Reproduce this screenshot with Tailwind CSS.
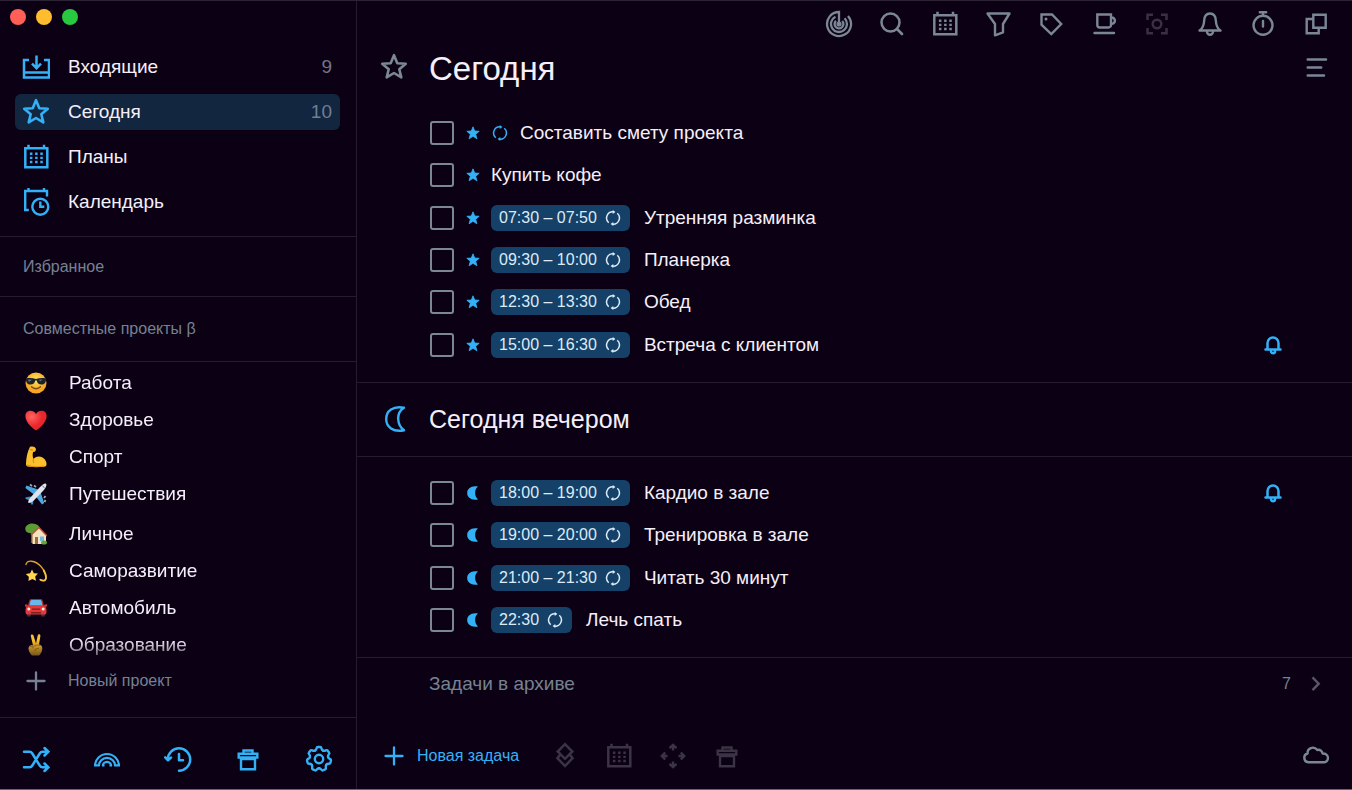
<!DOCTYPE html>
<html lang="ru">
<head>
<meta charset="utf-8">
<meta name="viewport" content="width=device-width, initial-scale=1">
<title>Сегодня</title>
<script src="https://cdn.jsdelivr.net/npm/@tailwindcss/browser@4"></script>
</head>
<body class="bg-[#0c0114] font-['Liberation_Sans',Arial,sans-serif] text-[#f5effa] text-[19px] leading-6">
<svg class="hidden" aria-hidden="true">
  <symbol id="star" viewBox="0 0 28 28"><path d="M14 2.200l3.300 8 8.500.6-6.500 5.500 2 8.100-7.300-4.400-7.300 4.400 2-8.100-6.500-5.500 8.500-.6z" fill="none" stroke="currentColor" stroke-width="2.600" stroke-linejoin="round"/></symbol>
  <symbol id="inbox" viewBox="0 0 28 28"><path d="M7 7H2v17.500h25V7h-5M2 19.500h25M14.500 2.500V15M10 10.700l4.500 4.500 4.500-4.500" fill="none" stroke="currentColor" stroke-width="2.500"/></symbol>
  <symbol id="calendar" viewBox="0 0 28 28"><path d="M3.300 5.300h22v18.900h-22zM6.500 1.800v3.500M22 1.800v3.500" fill="none" stroke="currentColor" stroke-width="2.500"/><path d="M7.900 9.600h2.500V12H7.900zm5.200 0h2.500V12h-2.500zm5.200 0h2.500V12h-2.500zM7.900 13.700h2.500v2.400H7.900zm5.200 0h2.500v2.400h-2.500zm5.200 0h2.500v2.400h-2.500zM7.900 17.800h2.500v2.400H7.900zm5.200 0h2.500v2.400h-2.500zm5.200 0h2.500v2.400h-2.500z" fill="currentColor"/></symbol>
  <symbol id="schedule" viewBox="0 0 28 28"><path d="M6.800 22H3.200V3H25v5.500M6.500 0v3M22 0v3M18.300 13.500v5.300h4" fill="none" stroke="currentColor" stroke-width="2.400"/><circle cx="18.300" cy="18.800" r="8" fill="none" stroke="currentColor" stroke-width="2.400"/></symbol>
  <symbol id="plus" viewBox="0 0 28 28"><path d="M14 5.500v17M5.500 14h17" fill="none" stroke="currentColor" stroke-width="2.300" stroke-linecap="round"/></symbol>
  <symbol id="shuffle" viewBox="0 0 28 28"><path d="M2 6.700h5.500c1.500 0 2 .5 2.800 1.800l7.400 12c.8 1.300 1.300 1.800 2.800 1.800H26M2 22.300h5.500c1.500 0 2-.5 2.800-1.800l7.400-12c.8-1.300 1.300-1.800 2.800-1.800H26M22.500 3l3.800 3.700-3.800 3.800M22.500 18.500l3.800 3.800-3.800 3.700" fill="none" stroke="currentColor" stroke-width="2.500" stroke-linecap="round"/></symbol>
  <symbol id="rainbow" viewBox="0 0 28 28"><path d="M2 21a12 12 0 0 1 24 0M5.900 21a8.100 8.100 0 0 1 16.200 0M9.800 21a4.200 4.200 0 0 1 8.400 0M1 20.300h5.900M9 20.300h2.500M16.500 20.300H19M21.100 20.300H27" fill="none" stroke="currentColor" stroke-width="2.200"/></symbol>
  <symbol id="history" viewBox="0 0 28 28"><path d="M3.800 14.500A11.200 11.200 0 1 1 15 25.700M1.200 12.300l2.800 3 3-2.700M15 9v6.300h4" fill="none" stroke="currentColor" stroke-width="2.500" stroke-linecap="round" stroke-linejoin="round"/></symbol>
  <symbol id="trash" viewBox="0 0 28 28"><path d="M4.700 8.700h18.600v3.800H4.700zM9.500 8.500V5.500h9v3M7 12.500v11.700h14V12.500M7 14h14" fill="none" stroke="currentColor" stroke-width="2.400"/></symbol>
  <symbol id="tooth" viewBox="-14 -14 28 28"><path d="M-4.030-8.380C-3-8.900-2.700-9.600-2.500-10.600Q-2.200-12-1.100-12H1.100Q2.200-12 2.500-10.600C2.700-9.600 3-8.900 4.030-8.380" fill="none" stroke="currentColor" stroke-width="2.400" stroke-linecap="round"/></symbol>
  <symbol id="gear" viewBox="0 0 28 28"><g fill="none"><use href="#tooth" width="28" height="28"/><use href="#tooth" width="28" height="28" transform="rotate(51.430 14 14)"/><use href="#tooth" width="28" height="28" transform="rotate(102.860 14 14)"/><use href="#tooth" width="28" height="28" transform="rotate(154.290 14 14)"/><use href="#tooth" width="28" height="28" transform="rotate(205.710 14 14)"/><use href="#tooth" width="28" height="28" transform="rotate(257.140 14 14)"/><use href="#tooth" width="28" height="28" transform="rotate(308.570 14 14)"/><circle cx="14" cy="14" r="4.200" stroke="currentColor" stroke-width="2.400"/></g></symbol>
  <symbol id="radar" viewBox="0 0 28 28"><path d="M14 14V2A12 12 0 1 0 23 6M10.500 6.800A8 8 0 1 0 19.600 8.300M11 10.800A4.400 4.400 0 1 0 17.200 11" fill="none" stroke="currentColor" stroke-width="2.300"/><circle cx="14" cy="14" r="2.600" fill="currentColor"/></symbol>
  <symbol id="search" viewBox="0 0 28 28"><circle cx="12.500" cy="12.500" r="9" fill="none" stroke="currentColor" stroke-width="2.500"/><path d="M19 19l5 5" stroke="currentColor" stroke-width="2.700" stroke-linecap="round"/></symbol>
  <symbol id="funnel" viewBox="0 0 28 28"><path d="M3.500 3.500h22L19 14v8.300l-8 3V14z" fill="none" stroke="currentColor" stroke-width="2.400" stroke-linejoin="round"/></symbol>
  <symbol id="tag" viewBox="0 0 28 28"><path d="M4.500 4.500H15L24.200 14 14.300 24 4.500 14.700z" fill="none" stroke="currentColor" stroke-width="2.400"/><circle cx="9" cy="8.900" r="1.500" fill="currentColor"/></symbol>
  <symbol id="cup" viewBox="0 0 28 28"><path d="M7.300 4.500H21V15a2.500 2.500 0 0 1-2.500 2.500H9.800A2.500 2.500 0 0 1 7.300 15zM21 7.500h.7a3.200 3.200 0 0 1 0 6.400H21M4.500 23h19.500" fill="none" stroke="currentColor" stroke-width="2.400" stroke-linecap="round"/></symbol>
  <symbol id="focus" viewBox="0 0 28 28"><path d="M4.500 10V4.700H10M18 4.700h5.500V10M23.500 18v5.200H18M10 23.200H4.500V18" fill="none" stroke="currentColor" stroke-width="2.500"/><circle cx="14" cy="14" r="4.300" fill="none" stroke="currentColor" stroke-width="2.500"/></symbol>
  <symbol id="bell" viewBox="0 0 28 28"><path d="M3.500 20.500C7.500 18 7.900 15 8.100 11c.2-5 2.400-7.500 5.900-7.500s5.700 2.500 5.900 7.500c.2 4 .6 7 4.600 9.500zM11 21v.8a3 3 0 0 0 6 0V21" fill="none" stroke="currentColor" stroke-width="2.400" stroke-linejoin="round"/></symbol>
  <symbol id="timer" viewBox="0 0 28 28"><circle cx="14" cy="15.300" r="9.500" fill="none" stroke="currentColor" stroke-width="2.400"/><path d="M10.800 2.300h6.400M14 2.300v3M14 11v5.500" stroke="currentColor" stroke-width="2.400" stroke-linecap="round"/></symbol>
  <symbol id="copy" viewBox="0 0 28 28"><path d="M11.300 4.700h12.400v13H11.300zM11.300 9H4.700v14.200h12v-5.500" fill="none" stroke="currentColor" stroke-width="2.400"/></symbol>
  <symbol id="lines" viewBox="0 0 28 28"><path d="M5.700 5.500h18.300M5.700 13.500h13.500M5.700 21.500h16.300" stroke="currentColor" stroke-width="2.500" stroke-linecap="round"/></symbol>
  <symbol id="moon" viewBox="0 0 28 28"><path d="M24 2.700C13 .5 6.200 6 6.200 14S13 27.500 24 25.300C17 20 15.500 8 24 2.700z" fill="none" stroke="currentColor" stroke-width="2.400" stroke-linejoin="round"/></symbol>
  <symbol id="stack" viewBox="0 0 28 28"><path d="M14 2.200l7.300 7.300L14 16.800 6.700 9.500zM8.700 13.200l-2.300 3L14 24l7.600-7.800-2.300-3" fill="none" stroke="currentColor" stroke-width="2.500"/></symbol>
  <symbol id="move" viewBox="0 0 28 28"><path d="M10.500 6.200L14 2.800l3.500 3.400M14 3v5.500M10.500 21.800l3.500 3.400 3.500-3.400M14 25v-5.500M6.200 10.500L2.800 14l3.400 3.500M3 14h5.500M21.800 10.500l3.400 3.500-3.400 3.500M25 14h-5.500" fill="none" stroke="currentColor" stroke-width="2.400"/></symbol>
  <symbol id="cloud" viewBox="0 0 28 28"><path d="M6.200 20.300a4.500 4.500 0 0 1-.6-8.800C5 6 11.800 3.600 15.300 8c2.500-.7 5 .8 5.200 3.500 3.200-.1 5.500 1.700 5.500 4.500a4.300 4.300 0 0 1-4.300 4.300z" fill="none" stroke="currentColor" stroke-width="2.400" stroke-linejoin="round"/></symbol>
  <symbol id="chevron" viewBox="0 0 28 28"><path d="M10.500 7.300l6.200 6.400-6.200 6.400" fill="none" stroke="currentColor" stroke-width="2.400"/></symbol>
  <symbol id="star-s" viewBox="0 0 14 14"><path d="M7 .8l1.700 4.200 4.500.3-3.500 2.900 1.200 4.600L7 10.300l-3.900 2.500 1.200-4.600L.8 5.300 5.300 5z" fill="#33b1f7" stroke="#33b1f7" stroke-width=".8" stroke-linejoin="round"/></symbol>
  <symbol id="moon-s" viewBox="0 0 14 14"><path d="M12 .6C5.500-.8 1.200 2.500 1.200 7s4.300 7.800 10.800 6.400C8.300 10.500 8 3.500 12 .6z" fill="#33b1f7"/></symbol>
  <symbol id="repeat" viewBox="0 0 16 16"><path d="M3.700 12.700A6.200 6.200 0 0 1 8.500 1.900M12.300 3.300A6.200 6.200 0 0 1 7.500 14.100" fill="none" stroke="currentColor" stroke-width="1.500"/><path d="M7.700 0l2.700 2-2.700 2zM8.300 16l-2.700-2 2.700-2z" fill="currentColor"/></symbol>
  <symbol id="bell-s" viewBox="0 0 20 20"><path d="M2.500 14.500h15M4.500 14V8a5.500 5.500 0 0 1 11 0v6M8 15.500v.7a2 2 0 0 0 4 0v-.7" fill="none" stroke="currentColor" stroke-width="2.500" stroke-linecap="round"/></symbol>
</svg>

<div class="flex min-h-screen border-t border-[#2c2434] border-b border-b-[#6d6172]">
  <aside class="flex w-[357px] shrink-0 flex-col border-r border-[#251c2f]">
    <div class="flex h-8 items-center gap-[10px] pl-[10px]">
      <button aria-label="Закрыть" class="size-4 rounded-full bg-[#ff5f57]"></button>
      <button aria-label="Свернуть" class="size-4 rounded-full bg-[#febc2e]"></button>
      <button aria-label="Развернуть" class="size-4 rounded-full bg-[#28c840]"></button>
    </div>
    <nav class="flex flex-col gap-[9px] pt-4 pr-4 pb-4 pl-[15px]">
      <a href="#" class="flex h-9 items-center rounded-md px-[7px]"><svg class="size-7 text-[#33b1f7]"><use href="#inbox"/></svg><span class="ml-[18px] flex-1">Входящие</span><span class="mr-[1px] text-[#767384]">9</span></a>
      <a href="#" aria-current="page" class="flex h-9 items-center rounded-md bg-[#13263f] px-[7px]"><svg class="size-7 text-[#33b1f7]"><use href="#star"/></svg><span class="ml-[18px] flex-1">Сегодня</span><span class="mr-[1px] text-[#6f7f95]">10</span></a>
      <a href="#" class="flex h-9 items-center rounded-md px-[7px]"><svg class="size-7 text-[#33b1f7]"><use href="#calendar"/></svg><span class="ml-[18px]">Планы</span></a>
      <a href="#" class="flex h-9 items-center rounded-md px-[7px]"><svg class="size-7 text-[#33b1f7]"><use href="#schedule"/></svg><span class="ml-[18px]">Календарь</span></a>
    </nav>
    <h2 class="flex h-[60px] items-center border-t border-[#251c2f] pl-[23px] text-base text-[#758292]">Избранное</h2>
    <h2 class="flex h-[65px] items-center border-t border-[#251c2f] pl-[23px] text-base text-[#758292]">Совместные проекты β</h2>
    <div class="flex flex-1 flex-col border-t border-[#251c2f] pt-[2px]">
      <ul class="[mask-image:linear-gradient(to_bottom,black_276px,transparent_304px)]">
        <li><a href="#" class="flex h-[37px] items-center gap-[22px] pl-[25px]"><svg class="size-[22px]" viewBox="0 0 22 22"><defs><radialGradient id="y" cy=".35"><stop offset="0" stop-color="#ffe45c"/><stop offset="1" stop-color="#f5a623"/></radialGradient></defs><circle cx="11" cy="11" r="10.500" fill="url(#y)"/><path d="M.8 6.500C4 5.700 8 6 11 7c3-1 7-1.300 10.200-.5-.3 4-1.500 6-4.700 6-2.800 0-4.300-1.500-4.700-4h-1.600c-.4 2.500-1.900 4-4.700 4C2.300 12.500 1.100 10.500.8 6.500z" fill="#1d2226"/><path d="M3 7.500l4 .2-3 2.300zM14 7.800l3.500-.2-2.500 2z" fill="#68727b"/><path d="M6.500 14.800c2.500 2.600 6.500 2.600 9 0" fill="none" stroke="#7d4312" stroke-width="1.300" stroke-linecap="round"/></svg><span>Работа</span></a></li>
        <li><a href="#" class="flex h-[37px] items-center gap-[22px] pl-[25px]"><svg class="size-[22px]" viewBox="0 0 22 22"><defs><radialGradient id="r" cx=".3" cy=".3"><stop offset="0" stop-color="#ff6560"/><stop offset="1" stop-color="#e8262b"/></radialGradient></defs><path d="M11 21.500C5 17.500.4 12 .4 7 .4 1 8 0 11 5c3-5 10.600-4 10.600 2 0 5-4.600 10.500-10.600 14.500z" fill="url(#r)"/></svg><span>Здоровье</span></a></li>
        <li><a href="#" class="flex h-[37px] items-center gap-[22px] pl-[25px]"><svg class="size-[22px]" viewBox="0 0 22 22"><path d="M5 .8C8 0 10 .5 10.800 2.500c.6 2-.5 3.300-2.700 3.500-.6 2-.6 4.700.4 7 1.500-2.600 6-3.300 9-1.600 3 1.700 4.500 5 4 7.300-.5 1.500-1.500 2.200-4 2.300-4.500.3-9.500 0-13.500-.3-2.500-.2-3.200-1-3-3.500C1.300 11.500 2.500 5.500 5 .8z" fill="#fbc02d"/><path d="M8.500 13c-.8 1.500-.7 2.500.5 4M5 4c1.200-.7 2-.6 3 .3M2 19c4 2 12 2 17 1" fill="none" stroke="#d98b16" stroke-width="1.100"/></svg><span>Спорт</span></a></li>
        <li><a href="#" class="flex h-[37px] items-center gap-[22px] pl-[25px]"><svg class="size-[22px]" viewBox="0 0 22 22"><path d="M13 6.500L1.500 2.500.3 5 9 11.500zM15.500 9l3.700 11-2.200 1.500L10.500 13z" fill="#4aa8de"/><path d="M5.500 13.500L.8 14.200.3 15.800 4.500 17.500 6.500 21.700 8 21.200 8.500 16.500z" fill="#3a8cc4"/><path d="M21 .8c1.200 1.400-.5 4.400-2.800 6.900L8.300 17.900c-2 1.500-4.300 2.400-4.900 1.800-.6-.6.300-2.900 1.800-4.900L15 4C17.500 1.500 20 -.3 21 .8z" fill="#dfe5ea"/><path d="M5 1.500l2 1.500M9 2.500l2 1.500M20.500 13l-1.500 2M20.500 17l-1 2" stroke="#9eacb8" stroke-width="1.800"/><path d="M17.500 3l2 1.700" stroke="#55606b"/></svg><span>Путешествия</span></a></li>
        <li class="pt-[3px]"><a href="#" class="flex h-[37px] items-center gap-[22px] pl-[25px]"><svg class="size-[22px]" viewBox="0 0 22 22"><path d="M6 9h2.500v11H6z" fill="#8b5a2b"/><path d="M.3 6C0 3 3.500.2 7.500.4c4 .2 7.500 2 6.500 5-.5 3-3.500 5-7 5C3 10.300.5 9 .3 6z" fill="#5d9b35"/><path d="M7.500 11l6.500-6 7 7v9H7.500z" fill="#f3e3bf"/><path d="M6 12l8-7.500L22 13" fill="none" stroke="#c94f3d" stroke-width="1.500"/><path d="M10 14h3v7h-3z" fill="#9b6a41"/><path d="M15 13.500h4V18h-4z" fill="#74b9e6"/><ellipse cx="19" cy="19.500" rx="3" ry="2" fill="#62a636"/></svg><span>Личное</span></a></li>
        <li><a href="#" class="flex h-[37px] items-center gap-[22px] pl-[25px]"><svg class="size-[22px]" viewBox="0 0 22 22"><path d="M.8 5C2-.5 10 0 16 6.500c4 4.500 6 10 4.500 13-.9 1.800-3.500 1.500-6-.2" fill="none" stroke="#e1a52c" stroke-width="1.300"/><path d="M18.500 10c2 3.500 3 7.500 2 9.500-.8 1.500-3 1.500-5.500 0" fill="none" stroke="#f9c638" stroke-width="1.700"/><path d="M7 9.500l1.800 3.700 4.200.3-2.800 3 .8 4.200-3.700-1.800L3.500 21l.3-4.200L.8 14l4.400-.7z" fill="#ffd84f"/></svg><span>Саморазвитие</span></a></li>
        <li><a href="#" class="flex h-[37px] items-center gap-[22px] pl-[25px]"><svg class="size-[22px]" viewBox="0 0 22 22"><path d="M2 15h4v4.500H2zM16 15h4v4.500h-4z" fill="#30343a"/><path d="M6 2h10c1.800 0 2.400 4 3 7H3c.6-3 1.200-7 3-7z" fill="#a92e2b"/><path d="M6.500 3h9c1.200 0 1.600 3.500 2 5.500h-13c.4-2 .8-5.500 2-5.500z" fill="#68b7ea"/><path d="M2.500 8.500h17c1.800 1 2 3.500 2 6 0 2-.5 3-1.500 3H2c-1 0-1.500-1-1.500-3 0-2.500.2-5 2-6z" fill="#e4373a"/><path d="M0 7.500h2.500v2H0zM19.500 7.500H22v2h-2.500z" fill="#e4373a"/><circle cx="3.800" cy="12" r="1.500" fill="#f5efe0"/><circle cx="18.200" cy="12" r="1.500" fill="#f5efe0"/><path d="M7 11.500h8v1.200H7zM6 15h10v1.500H6z" fill="#7d1d20"/></svg><span>Автомобиль</span></a></li>
        <li><a href="#" class="flex h-[37px] items-center gap-[22px] pl-[25px]"><svg class="size-[22px]" viewBox="0 0 22 22"><path d="M8 11.500L5.800 2C5.500 0 8 0 8.500 1.500l2.500 8 1.700-8c.5-2 3-1.500 2.700.5L14 10.500c3 .5 3.800 3 3 6-.6 2.500-2 4-3 5H7c-1.500-1.500-3.200-3.500-3.500-6.500C3.300 12 5 10.500 8 11.500z" fill="#fbc02d"/><path d="M4.500 13c1.500-1.500 3.500-.5 3.500 1.500M8 13c1.500-2 5-2.500 7.500-1.300M9.500 17c1-2 2.500-3 4.500-2.500" fill="none" stroke="#c9851a" stroke-width="1.100"/></svg><span>Образование</span></a></li>
      </ul>
      <button class="-mt-[2px] flex h-10 items-center gap-[18px] pl-[22px] text-base text-[#758292]"><svg class="size-7"><use href="#plus"/></svg>Новый проект</button>
    </div>
    <div class="flex h-[72px] items-start justify-between border-t border-[#251c2f] pt-[27px] pr-[23px] pl-[22px] text-[#33b1f7]">
      <button aria-label="Перемешать"><svg class="size-7"><use href="#shuffle"/></svg></button>
      <button aria-label="Радуга"><svg class="size-7"><use href="#rainbow"/></svg></button>
      <button aria-label="История"><svg class="size-7"><use href="#history"/></svg></button>
      <button aria-label="Корзина"><svg class="size-7"><use href="#trash"/></svg></button>
      <button aria-label="Настройки"><svg class="size-7"><use href="#gear"/></svg></button>
    </div>
  </aside>

  <main class="flex min-w-0 flex-1 flex-col">
    <div class="flex justify-end gap-[25px] pt-[9px] pr-[22px] text-[#7b8794]">
      <button aria-label="Обзор"><svg class="size-7"><use href="#radar"/></svg></button>
      <button aria-label="Поиск"><svg class="size-7"><use href="#search"/></svg></button>
      <button aria-label="Дата"><svg class="size-7"><use href="#calendar"/></svg></button>
      <button aria-label="Фильтр"><svg class="size-7"><use href="#funnel"/></svg></button>
      <button aria-label="Метки"><svg class="size-7"><use href="#tag"/></svg></button>
      <button aria-label="Перерыв"><svg class="size-7"><use href="#cup"/></svg></button>
      <button aria-label="Фокус" class="text-[#39313f]"><svg class="size-7"><use href="#focus"/></svg></button>
      <button aria-label="Напоминания"><svg class="size-7"><use href="#bell"/></svg></button>
      <button aria-label="Таймер"><svg class="size-7"><use href="#timer"/></svg></button>
      <button aria-label="Окна"><svg class="size-7"><use href="#copy"/></svg></button>
    </div>
    <header class="flex h-[74px] items-start pt-[11px] pr-[22px] pl-[23px]">
      <svg class="mt-1 size-7 text-[#7b8794]"><use href="#star"/></svg>
      <h1 class="ml-[21px] flex-1 text-[33px] leading-10">Сегодня</h1>
      <button aria-label="Меню" class="mt-[5px] text-[#7b8794]"><svg class="size-7"><use href="#lines"/></svg></button>
    </header>

    <ul class="flex min-h-[254px] flex-col pr-[69px] pl-[73px]">
      <li class="flex flex-1 items-center"><input id="t1" type="checkbox" class="size-6 appearance-none rounded-[3px] border-2 border-[#7b8794] checked:bg-[#33b1f7]"><label for="t1" class="flex flex-1 items-center pl-3"><svg class="size-[14px]"><use href="#star-s"/></svg><svg class="ml-3 size-4 text-[#33b1f7]"><use href="#repeat"/></svg><span class="ml-3">Составить смету проекта</span></label></li>
      <li class="flex flex-1 items-center"><input id="t2" type="checkbox" class="size-6 appearance-none rounded-[3px] border-2 border-[#7b8794] checked:bg-[#33b1f7]"><label for="t2" class="flex flex-1 items-center pl-3"><svg class="size-[14px]"><use href="#star-s"/></svg><span class="ml-[11px]">Купить кофе</span></label></li>
      <li class="flex flex-1 items-center"><input id="t3" type="checkbox" class="size-6 appearance-none rounded-[3px] border-2 border-[#7b8794] checked:bg-[#33b1f7]"><label for="t3" class="flex flex-1 items-center pl-3"><svg class="size-[14px]"><use href="#star-s"/></svg><span class="ml-[11px] flex h-[26px] items-center gap-2 rounded-md bg-[#154067] pr-[9px] pl-2 text-base text-[#dcebf8]">07:30 – 07:50<svg class="size-4"><use href="#repeat"/></svg></span><span class="ml-[14px]">Утренняя разминка</span></label></li>
      <li class="flex flex-1 items-center"><input id="t4" type="checkbox" class="size-6 appearance-none rounded-[3px] border-2 border-[#7b8794] checked:bg-[#33b1f7]"><label for="t4" class="flex flex-1 items-center pl-3"><svg class="size-[14px]"><use href="#star-s"/></svg><span class="ml-[11px] flex h-[26px] items-center gap-2 rounded-md bg-[#154067] pr-[9px] pl-2 text-base text-[#dcebf8]">09:30 – 10:00<svg class="size-4"><use href="#repeat"/></svg></span><span class="ml-[14px]">Планерка</span></label></li>
      <li class="flex flex-1 items-center"><input id="t5" type="checkbox" class="size-6 appearance-none rounded-[3px] border-2 border-[#7b8794] checked:bg-[#33b1f7]"><label for="t5" class="flex flex-1 items-center pl-3"><svg class="size-[14px]"><use href="#star-s"/></svg><span class="ml-[11px] flex h-[26px] items-center gap-2 rounded-md bg-[#154067] pr-[9px] pl-2 text-base text-[#dcebf8]">12:30 – 13:30<svg class="size-4"><use href="#repeat"/></svg></span><span class="ml-[14px]">Обед</span></label></li>
      <li class="flex flex-1 items-center"><input id="t6" type="checkbox" class="size-6 appearance-none rounded-[3px] border-2 border-[#7b8794] checked:bg-[#33b1f7]"><label for="t6" class="flex flex-1 items-center pl-3"><svg class="size-[14px]"><use href="#star-s"/></svg><span class="ml-[11px] flex h-[26px] items-center gap-2 rounded-md bg-[#154067] pr-[9px] pl-2 text-base text-[#dcebf8]">15:00 – 16:30<svg class="size-4"><use href="#repeat"/></svg></span><span class="ml-[14px]">Встреча с клиентом</span></label><svg class="size-5 text-[#33b1f7]"><use href="#bell-s"/></svg></li>
    </ul>

    <div class="mt-4 mb-[15px] flex h-[75px] items-center border-y border-[#251c2f] pb-[2px] pl-[23px]">
      <svg class="size-7 text-[#33b1f7]"><use href="#moon"/></svg>
      <h2 class="ml-[21px] text-[25px] leading-8">Сегодня вечером</h2>
    </div>

    <ul class="flex min-h-[169px] flex-col pr-[69px] pl-[73px]">
      <li class="flex flex-1 items-center"><input id="t7" type="checkbox" class="size-6 appearance-none rounded-[3px] border-2 border-[#7b8794] checked:bg-[#33b1f7]"><label for="t7" class="flex flex-1 items-center pl-3"><svg class="size-[14px]"><use href="#moon-s"/></svg><span class="ml-[11px] flex h-[26px] items-center gap-2 rounded-md bg-[#154067] pr-[9px] pl-2 text-base text-[#dcebf8]">18:00 – 19:00<svg class="size-4"><use href="#repeat"/></svg></span><span class="ml-[14px]">Кардио в зале</span></label><svg class="size-5 text-[#33b1f7]"><use href="#bell-s"/></svg></li>
      <li class="flex flex-1 items-center"><input id="t8" type="checkbox" class="size-6 appearance-none rounded-[3px] border-2 border-[#7b8794] checked:bg-[#33b1f7]"><label for="t8" class="flex flex-1 items-center pl-3"><svg class="size-[14px]"><use href="#moon-s"/></svg><span class="ml-[11px] flex h-[26px] items-center gap-2 rounded-md bg-[#154067] pr-[9px] pl-2 text-base text-[#dcebf8]">19:00 – 20:00<svg class="size-4"><use href="#repeat"/></svg></span><span class="ml-[14px]">Тренировка в зале</span></label></li>
      <li class="flex flex-1 items-center"><input id="t9" type="checkbox" class="size-6 appearance-none rounded-[3px] border-2 border-[#7b8794] checked:bg-[#33b1f7]"><label for="t9" class="flex flex-1 items-center pl-3"><svg class="size-[14px]"><use href="#moon-s"/></svg><span class="ml-[11px] flex h-[26px] items-center gap-2 rounded-md bg-[#154067] pr-[9px] pl-2 text-base text-[#dcebf8]">21:00 – 21:30<svg class="size-4"><use href="#repeat"/></svg></span><span class="ml-[14px]">Читать 30 минут</span></label></li>
      <li class="flex flex-1 items-center"><input id="t10" type="checkbox" class="size-6 appearance-none rounded-[3px] border-2 border-[#7b8794] checked:bg-[#33b1f7]"><label for="t10" class="flex flex-1 items-center pl-3"><svg class="size-[14px]"><use href="#moon-s"/></svg><span class="ml-[11px] flex h-[26px] items-center gap-2 rounded-md bg-[#154067] pr-[9px] pl-2 text-base text-[#dcebf8]">22:30<svg class="size-4"><use href="#repeat"/></svg></span><span class="ml-[14px]">Лечь спать</span></label></li>
    </ul>

    <a href="#" class="mt-4 flex h-[52px] items-center border-t border-[#251c2f] pr-[22px] pl-[72px] text-[#758292]">
      <span class="flex-1">Задачи в архиве</span><span class="text-base">7</span><svg class="ml-[11px] size-7 text-[#5b5566]"><use href="#chevron"/></svg>
    </a>

    <footer class="mt-auto flex h-[66px] items-center pr-[22px] pl-[23px] text-[#3b3444]">
      <button class="flex items-center gap-[9px] text-base text-[#33b1f7]"><svg class="size-7"><use href="#plus"/></svg>Новая задача</button>
      <div class="ml-8 flex flex-1 gap-[26px]">
        <button aria-label="Слои"><svg class="size-7"><use href="#stack"/></svg></button>
        <button aria-label="Запланировать"><svg class="size-7"><use href="#calendar"/></svg></button>
        <button aria-label="Переместить"><svg class="size-7"><use href="#move"/></svg></button>
        <button aria-label="Удалить"><svg class="size-7"><use href="#trash"/></svg></button>
      </div>
      <button aria-label="Синхронизация" class="text-[#7b8794]"><svg class="size-7"><use href="#cloud"/></svg></button>
    </footer>
  </main>
</div>
</body>
</html>
